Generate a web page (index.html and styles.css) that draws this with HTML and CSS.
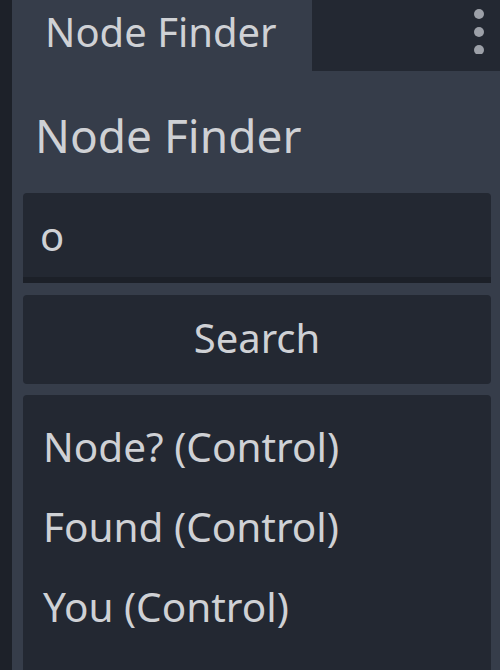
FILE: index.html
```html
<!DOCTYPE html>
<html lang="en">
<head>
    <meta charset="UTF-8">
    <meta name="viewport" content="width=device-width, initial-scale=1.0">
    <title>Node Finder</title>
    <link rel="stylesheet" href="styles.css">
</head>
<body>
    <div class="side-strip"></div>

    <div class="dock">
        <div class="tab-bar">
            <div class="tab">Node Finder</div>
            <button class="menu-btn" title="More">
                <svg width="12" height="46" viewBox="0 0 12 46">
                    <circle cx="6" cy="6" r="5"/>
                    <circle cx="6" cy="24" r="5"/>
                    <circle cx="6" cy="42" r="5"/>
                </svg>
            </button>
        </div>

        <div class="panel">
            <h1 class="title">Node Finder</h1>

            <input type="text" class="search-input" value="o">

            <button class="search-btn">Search</button>

            <ul class="results">
                <li>Node? (Control)</li>
                <li>Found (Control)</li>
                <li>You (Control)</li>
            </ul>
        </div>
    </div>
</body>
</html>
```
FILE: styles.css
```css
:root {
    --strip-color: #1d2129;
    --panel-bg: #363d4a;
    --dark-bg: #232832;
    --field-border: #1c2028;
    --text-color: #cfd1d5;
    --dots-color: #9ca0a8;
}

* {
    box-sizing: border-box;
}

body {
    font-family: 'Noto Sans', sans-serif;
    background-color: var(--panel-bg);
    color: var(--text-color);
    margin: 0;
    padding: 0;
    display: flex;
    height: 100vh;
    overflow: hidden;
}

.side-strip {
    width: 12px;
    flex-shrink: 0;
    background-color: var(--strip-color);
}

.dock {
    flex: 1;
    min-width: 0;
    display: flex;
    flex-direction: column;
}

.tab-bar {
    height: 71px;
    display: flex;
    background-color: var(--dark-bg);
}

.tab {
    width: 300px;
    padding: 0 0 8px 33px;
    background-color: var(--panel-bg);
    font-size: 40px;
    line-height: 63px;
}

.menu-btn {
    margin-left: auto;
    width: 42px;
    padding: 8px 0 0 0;
    background: none;
    border: none;
    display: flex;
    justify-content: center;
    align-items: flex-start;
}

.menu-btn svg {
    fill: var(--dots-color);
}

.panel {
    flex: 1;
    display: flex;
    flex-direction: column;
    padding: 0 9px 0 11px;
}

.title {
    margin: 33px 0 26px 12px;
    font-size: 46px;
    font-weight: 400;
    line-height: 63px;
}

.search-input {
    width: 100%;
    min-width: 0;
    height: 90px;
    font-family: inherit;
    font-size: 40px;
    line-height: 56px;
    padding: 14px 17px;
    color: var(--text-color);
    background-color: var(--dark-bg);
    border: none;
    border-bottom: 6px solid var(--field-border);
    border-radius: 4px 4px 0 0;
    outline: none;
}

.search-btn {
    margin-top: 12px;
    height: 89px;
    padding: 0 0 4px 0;
    font-family: inherit;
    font-size: 40px;
    line-height: 85px;
    color: var(--text-color);
    background-color: var(--dark-bg);
    border: none;
    border-radius: 4px;
}

.results {
    flex: 1;
    margin: 11px 0 0 0;
    padding: 12px 20px;
    list-style: none;
    background-color: var(--dark-bg);
    border-radius: 4px 4px 0 0;
    font-size: 40.5px;
    line-height: 80px;
}
```
